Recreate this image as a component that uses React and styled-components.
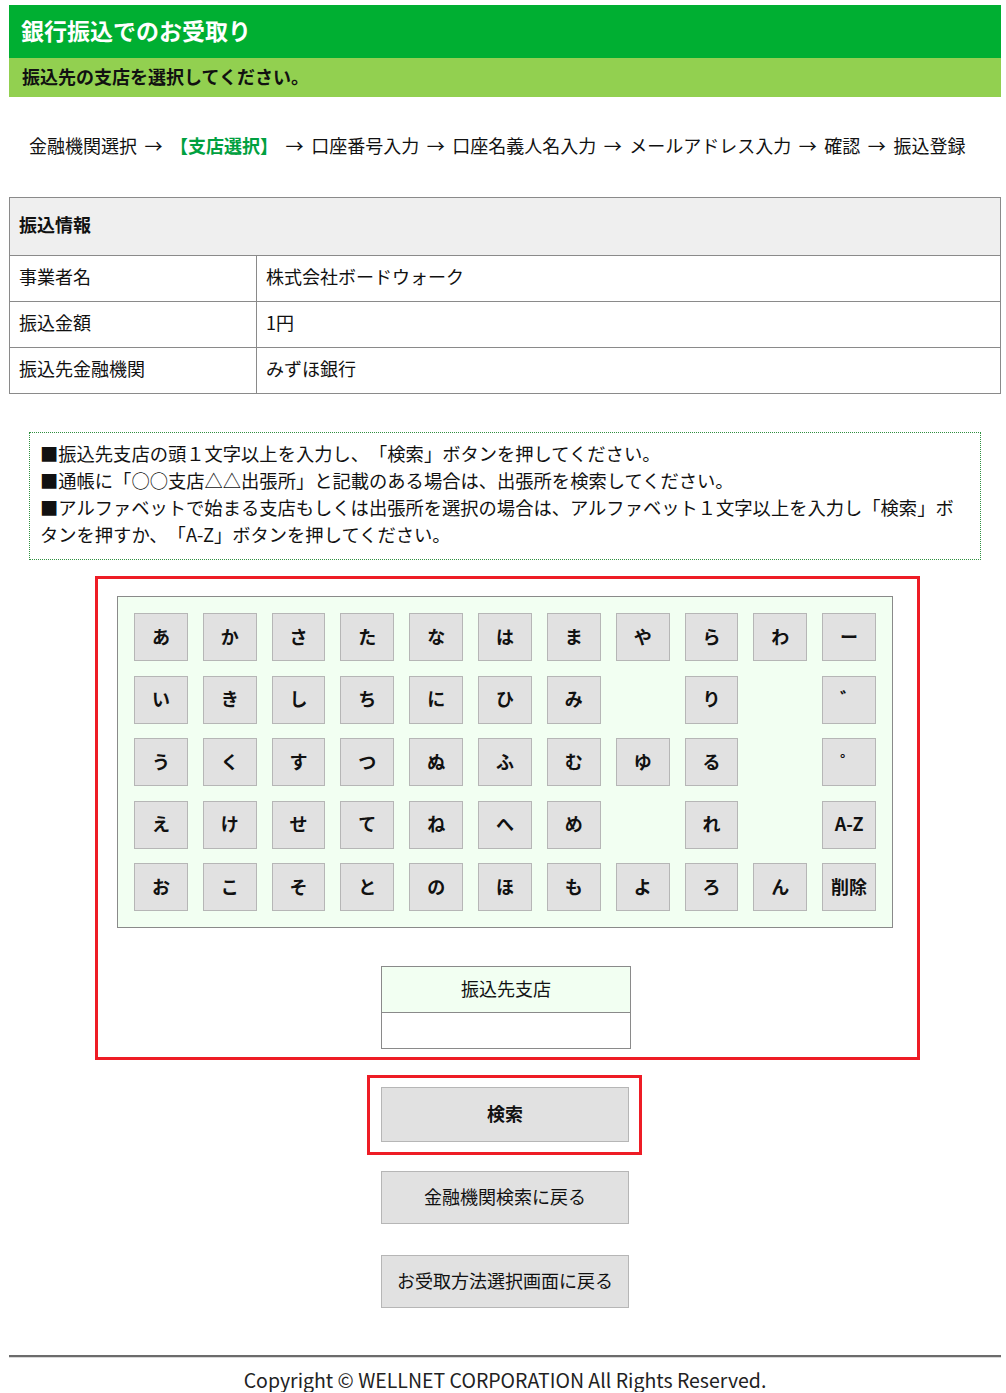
import React from 'react'
import styled, { createGlobalStyle } from 'styled-components'

const GlobalStyle = createGlobalStyle`
  body {
    margin: 0;
    background: #fff;
    color: #111;
    font-family: "Noto Sans CJK JP", "Noto Sans", sans-serif;
    font-size: 18px;
    text-spacing-trim: space-all;
  }
`

const Page = styled.div`
  padding: 5px 5px 0 9px;
`

const TitleBar = styled.h1`
  margin: 0;
  height: 53px;
  box-sizing: border-box;
  display: flex;
  align-items: center;
  padding: 0 0 4px 12px;
  background: #00af32;
  color: #fff;
  font-size: 23px;
  font-weight: bold;
`

const SubBar = styled.div`
  height: 39px;
  box-sizing: border-box;
  display: flex;
  align-items: center;
  padding: 0 0 3px 13px;
  background: #92d050;
  font-size: 18px;
  font-weight: bold;
`

const Steps = styled.div`
  height: 100px;
  box-sizing: border-box;
  display: flex;
  align-items: center;
  padding: 0 0 4px 20px;
  font-size: 18px;
  white-space: pre;
  word-spacing: 3.5px;
`

const ActiveStep = styled.span`
  color: #00a040;
  font-weight: bold;
`

const InfoTable = styled.table`
  width: 100%;
  border-collapse: collapse;
  font-size: 18px;

  th,
  td {
    border: 1px solid #8a8a8a;
    padding: 0 9px 5px;
    text-align: left;
    font-weight: normal;
  }
`

const HeadCell = styled.th`
  && {
    height: 52px;
    background: #efefef;
    font-weight: bold;
  }
`

const Row = styled.tr`
  height: 46px;
`

const LabelCell = styled.td`
  width: 228px;
`

const Notice = styled.div`
  margin: 38px 20px 0;
  padding: 7px 14px 11px 10px;
  border: 1px dotted #2f8f3f;
  line-height: 27px;
  font-size: 18.3px;

  p {
    margin: 0;
  }
`

const Highlight = styled.div`
  border: 3px solid #ee1c25;
  box-sizing: border-box;
  width: ${p => p.$width}px;
  margin-left: ${p => p.$left}px;
  margin-top: ${p => p.$top}px;
  padding: ${p => p.$pad};
`

const KanaPanel = styled.div`
  width: 776px;
  box-sizing: border-box;
  border: 1px solid #8a8a8a;
  background: #f2fff2;
  padding: 16px;
  display: grid;
  grid-template-columns: repeat(11, 1fr);
  grid-auto-rows: 48px;
  column-gap: 15px;
  row-gap: 14.5px;
`

const KanaKey = styled.button`
  margin: 0;
  padding: 0 0 3px;
  box-sizing: border-box;
  border: 1px solid #b6b6b6;
  background: #e1e1e1;
  color: #111;
  font-family: inherit;
  font-size: 18px;
  font-weight: bold;
  display: flex;
  align-items: center;
  justify-content: center;
  cursor: pointer;
`

const Blank = styled.div``

const BranchBox = styled.div`
  width: 250px;
  margin: 38px 0 0 264px;
  border: 1px solid #8a8a8a;
  box-sizing: border-box;
`

const BranchLabel = styled.div`
  height: 46px;
  box-sizing: border-box;
  padding-bottom: 4px;
  display: flex;
  align-items: center;
  justify-content: center;
  background: #f2fff2;
  border-bottom: 1px solid #8a8a8a;
  font-size: 18px;
`

const BranchInput = styled.input`
  display: block;
  width: 100%;
  height: 35px;
  box-sizing: border-box;
  border: 0;
  background: #fff;
  font-family: inherit;
  font-size: 18px;
  outline: none;
`

const ActionButton = styled.button`
  display: block;
  width: 248px;
  height: ${p => p.$height}px;
  margin: ${p => p.$margin};
  padding: 0 0 4px;
  box-sizing: border-box;
  border: 1px solid #b6b6b6;
  background: #e1e1e1;
  color: #111;
  font-family: inherit;
  font-size: 18px;
  font-weight: ${p => (p.$bold ? 'bold' : 'normal')};
  cursor: pointer;
`

const Rule = styled.hr`
  margin: 47px 0 0;
  border: 0;
  border-top: 2px solid #6b6b6b;
  border-bottom: 1px solid #d8d8d8;
`

const Copyright = styled.div`
  text-align: center;
  line-height: 24px;
  margin-top: 10px;
  font-size: 19.5px;
  color: #222;
`

const kana = [
  ['あ', 'か', 'さ', 'た', 'な', 'は', 'ま', 'や', 'ら', 'わ', 'ー'],
  ['い', 'き', 'し', 'ち', 'に', 'ひ', 'み', '', 'り', '', '゛'],
  ['う', 'く', 'す', 'つ', 'ぬ', 'ふ', 'む', 'ゆ', 'る', '', '゜'],
  ['え', 'け', 'せ', 'て', 'ね', 'へ', 'め', '', 'れ', '', 'A-Z'],
  ['お', 'こ', 'そ', 'と', 'の', 'ほ', 'も', 'よ', 'ろ', 'ん', '削除'],
]

const info = [
  ['事業者名', '株式会社ボードウォーク'],
  ['振込金額', '1円'],
  ['振込先金融機関', 'みずほ銀行'],
]

const App = () => {
  const [branch, setBranch] = React.useState('')

  const onKey = k => {
    if (k === '削除') setBranch(branch.slice(0, -1))
    else if (k !== 'A-Z') setBranch(branch + k)
  }

  return (
    <Page>
      <GlobalStyle />
      <TitleBar>銀行振込でのお受取り</TitleBar>
      <SubBar>振込先の支店を選択してください。</SubBar>

      <Steps>
        {'金融機関選択 → '}
        <ActiveStep>【支店選択】</ActiveStep>
        {' → 口座番号入力 → 口座名義人名入力 → メールアドレス入力 → 確認 → 振込登録'}
      </Steps>

      <InfoTable>
        <tbody>
          <tr>
            <HeadCell colSpan={2}>振込情報</HeadCell>
          </tr>
          {info.map(([label, value]) => (
            <Row key={label}>
              <LabelCell>{label}</LabelCell>
              <td>{value}</td>
            </Row>
          ))}
        </tbody>
      </InfoTable>

      <Notice>
        <p>■振込先支店の頭１文字以上を入力し、「検索」ボタンを押してください。</p>
        <p>■通帳に「○○支店△△出張所」と記載のある場合は、出張所を検索してください。</p>
        <p>
          ■アルファベットで始まる支店もしくは出張所を選択の場合は、アルファベット１文字以上を入力し「検索」ボタンを押すか、「A-Z」ボタンを押してください。
        </p>
      </Notice>

      <Highlight $width={825} $left={86} $top={16} $pad="17px 0 8px 19px">
        <KanaPanel>
          {kana.flat().map((k, i) =>
            k ? (
              <KanaKey key={i} onClick={() => onKey(k)}>
                {k}
              </KanaKey>
            ) : (
              <Blank key={i} />
            ),
          )}
        </KanaPanel>
        <BranchBox>
          <BranchLabel>振込先支店</BranchLabel>
          <BranchInput
            value={branch}
            onChange={e => setBranch(e.target.value)}
          />
        </BranchBox>
      </Highlight>

      <Highlight $width={275} $left={358} $top={15} $pad="9px 0 10px 11px">
        <ActionButton $bold $height={55} $margin="0">
          検索
        </ActionButton>
      </Highlight>

      <ActionButton $height={53} $margin="16px 0 0 372px">
        金融機関検索に戻る
      </ActionButton>
      <ActionButton $height={53} $margin="31px 0 0 372px">
        お受取方法選択画面に戻る
      </ActionButton>

      <Rule />
      <Copyright>Copyright © WELLNET CORPORATION All Rights Reserved.</Copyright>
    </Page>
  )
}

export default App
